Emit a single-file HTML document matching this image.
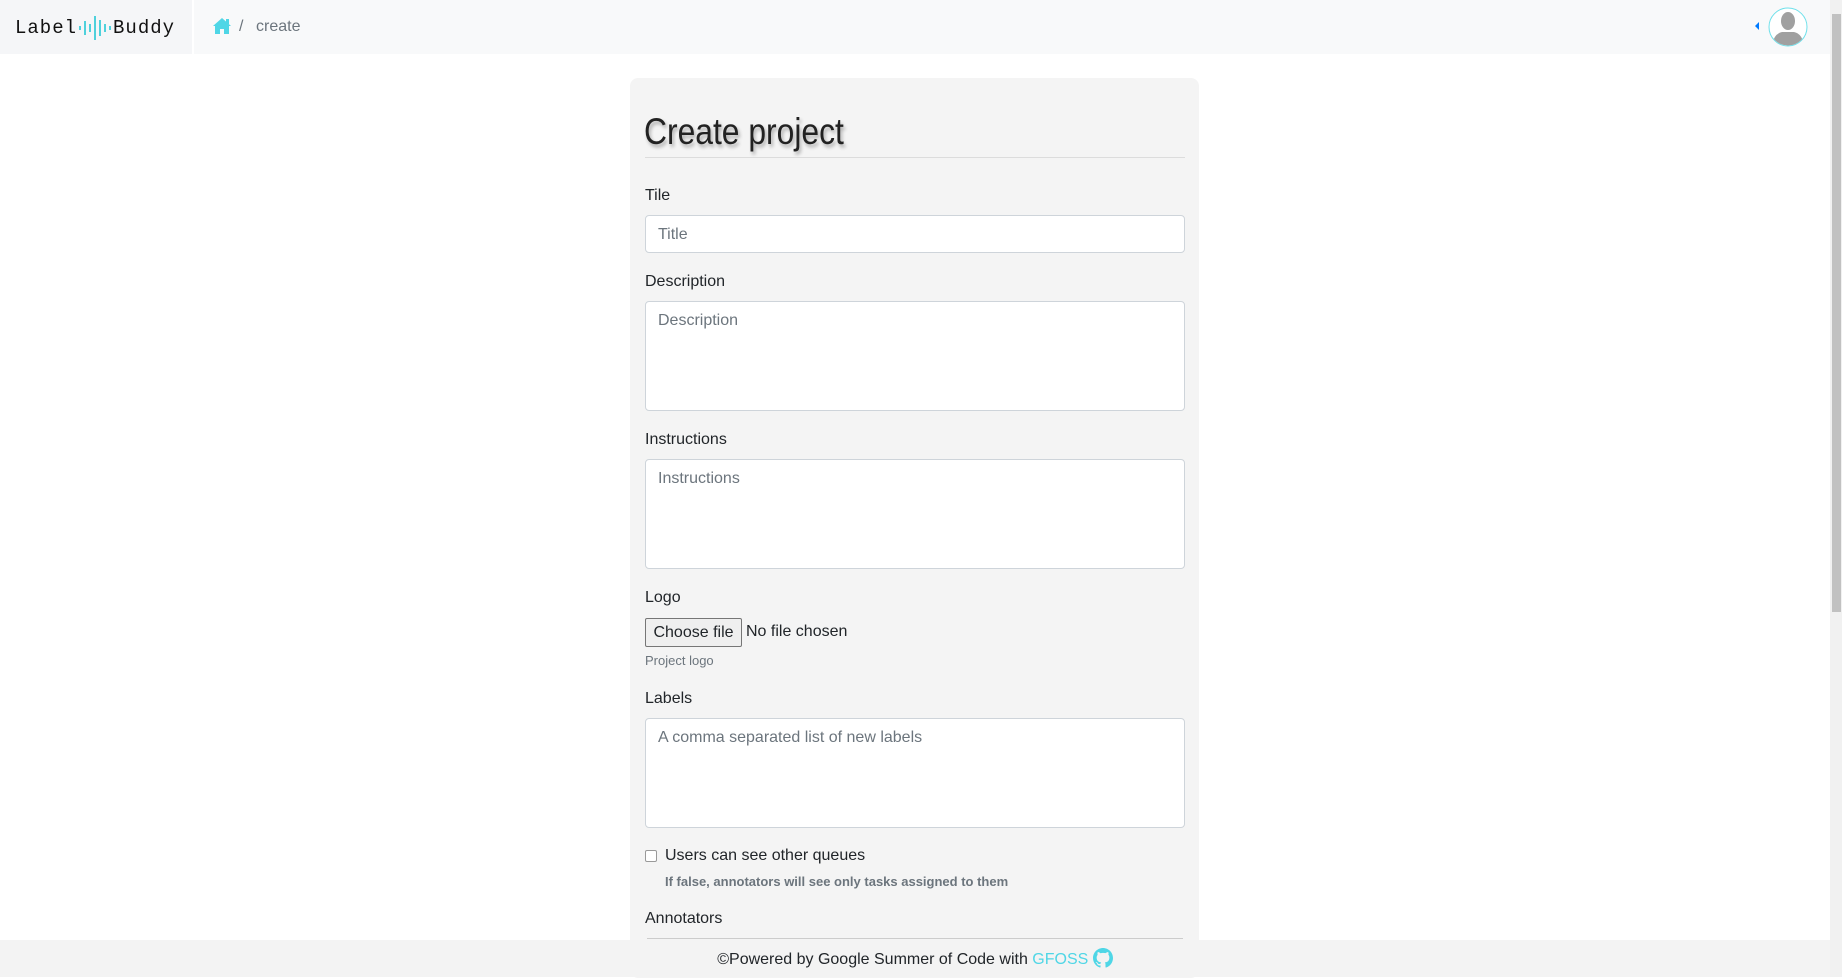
<!DOCTYPE html>
<html><head><meta charset="utf-8"><style>
*{box-sizing:border-box;margin:0;padding:0}
body{width:1842px;height:977px;overflow:hidden;background:#fff;font-family:"Liberation Sans",Arial,sans-serif;font-size:16px;color:#212529;position:relative}
.abs{position:absolute}
#hdr{left:0;top:0;width:1830px;height:54px;background:#f8f9fa}
#logoarea{left:0;top:0;width:194px;height:54px;background:#f5f6f8;border-right:2px solid #fff}
#logo{left:15px;top:15px;font-family:"Liberation Mono",monospace;font-size:19px;letter-spacing:1px;color:#111;white-space:nowrap;display:flex;align-items:center}
#scroll{left:1830px;top:0;width:12px;height:977px;background:#f1f1f1}
#thumb{left:1832px;top:14px;width:9px;height:598px;background:#c1c1c1}
#card{left:630px;top:78px;width:569px;height:900px;background:#f4f4f4;border-radius:8px}
.lbl{left:645px;font-size:16px;line-height:20px}
.inp{left:645px;width:540px;background:#fff;border:1px solid #ced4da;border-radius:4px;color:#6c757d;padding:7px 12px;font-size:16px;line-height:24px}
#footer{left:0;top:940px;width:1830px;height:37px;background:#f3f3f3;text-align:center;font-size:16px;line-height:39px}
</style></head><body>
<div id="hdr" class="abs"></div>
<div id="logoarea" class="abs"></div>
<div id="logo" class="abs">Label<svg width="34" height="26" viewBox="0 0 34 26" style="margin:0 1px"><g stroke="#4fd1dc" stroke-width="2"><line x1="2" y1="11" x2="2" y2="15"/><line x1="7" y1="6" x2="7" y2="20"/><line x1="12" y1="9" x2="12" y2="17"/><line x1="17" y1="1" x2="17" y2="25"/><line x1="22" y1="5" x2="22" y2="21"/><line x1="27" y1="9" x2="27" y2="17"/><line x1="32" y1="11" x2="32" y2="15"/></g></svg>Buddy</div>
<svg class="abs" style="left:212px;top:17px" width="20" height="18" viewBox="0 0 20 18"><path d="M10 1 L1 9 L3 9 L3 17 L8 17 L8 12 L12 12 L12 17 L17 17 L17 9 L19 9 Z" fill="#4fd6e6"/><rect x="14" y="2" width="3" height="5" fill="#4fd6e6"/></svg>
<div class="abs" style="left:239px;top:18px;color:#6c757d;font-size:16px">/</div>
<div class="abs" style="left:256px;top:18px;color:#6c757d;font-size:16px">create</div>
<div class="abs" style="left:1755px;top:22px;width:0;height:0;border-top:4px solid transparent;border-bottom:4px solid transparent;border-right:4px solid #007bff"></div>
<svg class="abs" style="left:1768px;top:7px" width="40" height="40" viewBox="0 0 40 40"><defs><clipPath id="c"><circle cx="20" cy="20" r="18.5"/></clipPath></defs><circle cx="20" cy="20" r="19" fill="#fff" stroke="#6fe0ea" stroke-width="1"/><g clip-path="url(#c)" fill="#a0a0a0"><ellipse cx="20" cy="14" rx="7" ry="9"/><path d="M4 40 Q5 27 14 25 L26 25 Q35 27 36 40Z"/></g></svg>
<div id="scroll" class="abs"></div><div id="thumb" class="abs"></div>
<div id="card" class="abs"></div>
<div class="abs" style="left:644px;top:110px;font-size:37px;line-height:44px;color:#222;text-shadow:2px 3px 4px rgba(0,0,0,.3);transform:scaleX(.86);transform-origin:left">Create project</div>
<div class="abs" style="left:645px;top:157px;width:540px;height:1px;background:#dcdcdc"></div>
<div class="abs lbl" style="top:186px">Tile</div>
<div class="abs inp" style="top:215px;height:38px">Title</div>
<div class="abs lbl" style="top:272px">Description</div>
<div class="abs inp" style="top:301px;height:110px">Description</div>
<div class="abs lbl" style="top:430px">Instructions</div>
<div class="abs inp" style="top:459px;height:110px">Instructions</div>
<div class="abs lbl" style="top:588px">Logo</div>
<div class="abs" style="left:645px;top:618px;width:97px;height:29px;background:#efefef;border:1px solid #767676;border-radius:2px;font-size:16px;line-height:27px;text-align:center">Choose file</div>
<div class="abs" style="left:746px;top:623px;font-size:16px">No file chosen</div>
<div class="abs" style="left:645px;top:653px;font-size:13px;color:#6c757d">Project logo</div>
<div class="abs lbl" style="top:689px">Labels</div>
<div class="abs inp" style="top:718px;height:110px">A comma separated list of new labels</div>
<div class="abs" style="left:645px;top:850px;width:12px;height:12px;border:1px solid #999;border-radius:2px;background:#fff"></div>
<div class="abs" style="left:665px;top:847px;font-size:16px">Users can see other queues</div>
<div class="abs" style="left:665px;top:874px;font-size:13px;font-weight:bold;color:#6c757d">If false, annotators will see only tasks assigned to them</div>
<div class="abs lbl" style="top:909px">Annotators</div>
<div class="abs" style="left:647px;top:938px;width:536px;height:1px;background:#ccc"></div>
<div id="footer" class="abs">©Powered by Google Summer of Code with <span style="color:#4fd6e6">GFOSS</span> <svg width="20" height="20" viewBox="0 0 16 16" style="vertical-align:-4px"><path fill="#4fd6e6" d="M8 0C3.58 0 0 3.58 0 8c0 3.54 2.29 6.53 5.47 7.59.4.07.55-.17.55-.38v-1.34c-2.23.48-2.7-1.07-2.7-1.07-.36-.92-.89-1.17-.89-1.17-.73-.5.05-.49.05-.49.8.06 1.23.83 1.23.83.72 1.23 1.88.87 2.34.66.07-.52.28-.87.51-1.07-1.78-.2-3.64-.89-3.64-3.95 0-.87.31-1.59.82-2.15-.08-.2-.36-1.02.08-2.12 0 0 .67-.21 2.2.82A7.6 7.6 0 0 1 8 3.87c.68 0 1.36.09 2 .27 1.53-1.04 2.2-.82 2.2-.82.44 1.1.16 1.92.08 2.12.51.56.82 1.27.82 2.15 0 3.07-1.87 3.75-3.65 3.95.29.25.54.73.54 1.48v2.2c0 .21.15.46.55.38A8 8 0 0 0 16 8c0-4.42-3.58-8-8-8z"/></svg></div>
</body></html>
